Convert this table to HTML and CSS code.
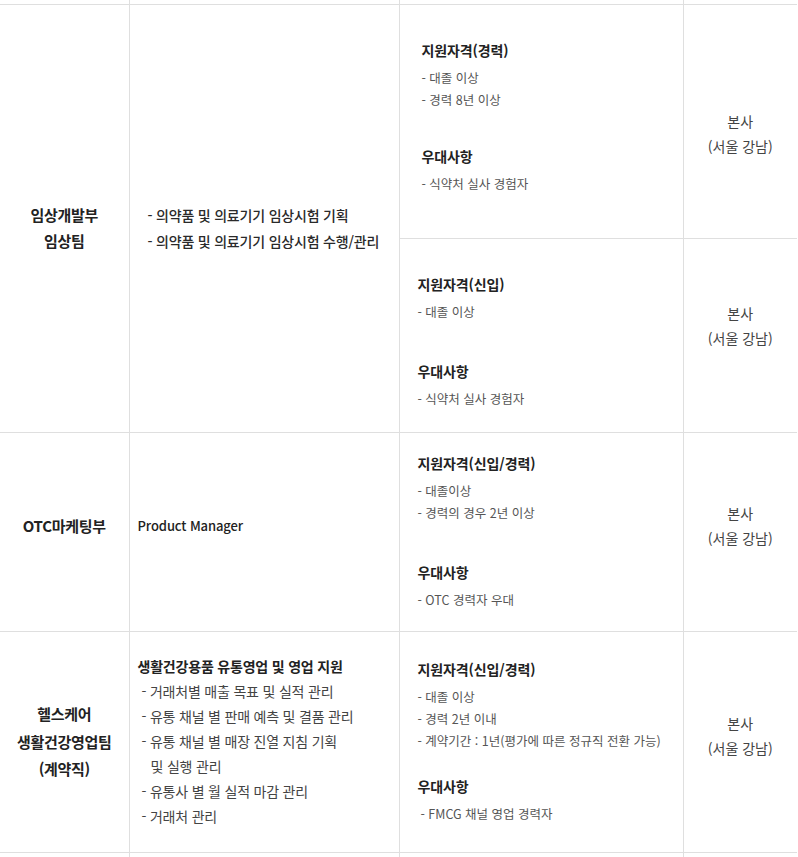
FILE: index.html
```html
<!DOCTYPE html>
<html lang="ko">
<head>
<meta charset="utf-8">
<title>채용 모집 부문</title>
<link rel="stylesheet" href="styles.css">
</head>
<body>
<table class="recruit">
  <colgroup>
    <col class="col-dept">
    <col class="col-duty">
    <col class="col-req">
    <col class="col-loc">
  </colgroup>
  <tr class="stub stub--top"><td></td><td></td><td></td><td></td></tr>

  <tr class="row-1a">
    <td rowspan="2" class="dept push-down">임상개발부<br>임상팀</td>
    <td rowspan="2" class="duty duty--wide push-down">
      <p class="duty-line">- 의약품 및 의료기기 임상시험 기획</p>
      <p class="duty-line">- 의약품 및 의료기기 임상시험 수행/관리</p>
    </td>
    <td class="req req--inset lift-s">
      <div class="req-sec">
        <p class="req-title">지원자격(경력)</p>
        <ul class="req-list">
          <li>- 대졸 이상</li>
          <li>- 경력 8년 이상</li>
        </ul>
      </div>
      <div class="req-sec">
        <p class="req-title">우대사항</p>
        <ul class="req-list">
          <li>- 식약처 실사 경험자</li>
        </ul>
      </div>
    </td>
    <td class="loc push-down-l">본사<br>(서울 강남)</td>
  </tr>

  <tr class="row-1b">
    <td class="req push-down-s">
      <div class="req-sec">
        <p class="req-title">지원자격(신입)</p>
        <ul class="req-list">
          <li>- 대졸 이상</li>
        </ul>
      </div>
      <div class="req-sec req-sec--wide">
        <p class="req-title">우대사항</p>
        <ul class="req-list">
          <li>- 식약처 실사 경험자</li>
        </ul>
      </div>
    </td>
    <td class="loc lift-l">본사<br>(서울 강남)</td>
  </tr>

  <tr class="row-2">
    <td class="dept lift-m">OTC마케팅부</td>
    <td class="duty lift-m"><p class="duty-plain">Product Manager</p></td>
    <td class="req">
      <div class="req-sec">
        <p class="req-title">지원자격(신입/경력)</p>
        <ul class="req-list">
          <li>- 대졸이상</li>
          <li>- 경력의 경우 2년 이상</li>
        </ul>
      </div>
      <div class="req-sec req-sec--wide">
        <p class="req-title">우대사항</p>
        <ul class="req-list">
          <li>- OTC 경력자 우대</li>
        </ul>
      </div>
    </td>
    <td class="loc lift-m">본사<br>(서울 강남)</td>
  </tr>

  <tr class="row-3">
    <td class="dept dept--tall">헬스케어<br>생활건강영업팀<br>(계약직)</td>
    <td class="duty">
      <p class="duty-title">생활건강용품 유통영업 및 영업 지원</p>
      <ul class="duty-list">
        <li>- 거래처별 매출 목표 및 실적 관리</li>
        <li>- 유통 채널 별 판매 예측 및 결품 관리</li>
        <li>- 유통 채널 별 매장 진열 지침 기획<br>및 실행 관리</li>
        <li>- 유통사 별 월 실적 마감 관리</li>
        <li>- 거래처 관리</li>
      </ul>
    </td>
    <td class="req">
      <div class="req-sec">
        <p class="req-title">지원자격(신입/경력)</p>
        <ul class="req-list">
          <li>- 대졸 이상</li>
          <li>- 경력 2년 이내</li>
          <li>- 계약기간 : 1년(평가에 따른 정규직 전환 가능)</li>
        </ul>
      </div>
      <div class="req-sec req-sec--tight">
        <p class="req-title">우대사항</p>
        <ul class="req-list req-list--inset">
          <li>- FMCG 채널 영업 경력자</li>
        </ul>
      </div>
    </td>
    <td class="loc lift-m">본사<br>(서울 강남)</td>
  </tr>

  <tr class="stub stub--bottom"><td></td><td></td><td></td><td></td></tr>
</table>
</body>
</html>
```

FILE: styles.css
```css
* {
  box-sizing: border-box;
}

body {
  margin: 0;
  background: #ffffff;
  color: #222222;
  font-family: "Noto Sans CJK KR", "Noto Sans", sans-serif;
}

p,
ul {
  margin: 0;
  padding: 0;
}

ul {
  list-style: none;
}

td {
  padding: 0;
  vertical-align: middle;
}

.recruit {
  width: 797px;
  border-collapse: collapse;
  table-layout: fixed;
}

.col-dept { width: 129px; }
.col-duty { width: 270px; }
.col-req  { width: 284px; }
.col-loc  { width: 114px; }

.recruit td {
  border: 1px solid #dfdfdf;
}

.recruit td:first-child {
  border-left: none;
}

.recruit td:last-child {
  border-right: none;
}

/* partial rows that continue beyond the visible area */
.stub--top td {
  height: 4px;
  border-top: none;
}

.stub--bottom td {
  height: 5px;
  border-bottom: none;
}

.row-1a { height: 234px; }
.row-1b { height: 194px; }
.row-2  { height: 199px; }
.row-3  { height: 221px; }

/* department column */
.dept {
  text-align: center;
  font-size: 15px;
  font-weight: 700;
  letter-spacing: -0.3px;
  line-height: 26px;
  color: #222222;
}

.dept--tall {
  line-height: 27.5px;
}

/* duty column */
.duty {
  padding-left: 8px;
  font-size: 14px;
  letter-spacing: -0.2px;
  color: #333333;
}

.duty--wide {
  padding-left: 18px;
}

.duty-line {
  line-height: 26px;
  font-weight: 500;
  color: #2a2a2a;
}

.duty-plain {
  font-size: 13px;
  font-weight: 500;
  letter-spacing: -0.1px;
  color: #222222;
  line-height: 26px;
}

.duty-title {
  font-weight: 700;
  color: #222222;
  line-height: 25px;
}

.duty-list li {
  line-height: 25px;
  padding-left: 13px;
  text-indent: -9px;
  color: #444444;
}

/* requirement column */
.req {
  padding-left: 18px;
}

.req--inset {
  padding-left: 22px;
}

.req-sec + .req-sec {
  margin-top: 34px;
}

.req-sec.req-sec--wide {
  margin-top: 37px;
}

.req-sec.req-sec--tight {
  margin-top: 23px;
}

.req-title {
  font-size: 14px;
  font-weight: 700;
  letter-spacing: -0.1px;
  line-height: 22px;
  margin-bottom: 6px;
  color: #222222;
}

.req-list li {
  font-size: 12.5px;
  line-height: 22px;
  color: #555555;
}

.req-list--inset li {
  padding-left: 3px;
}

/* location column */
.loc {
  text-align: center;
  font-size: 14px;
  line-height: 25px;
  color: #444444;
}

/* vertical nudges of cell content */
.push-down   { padding-top: 20px; }
.push-down-s { padding-top: 12px; }
.push-down-l { padding-top: 26px; }
.lift-s      { padding-bottom: 8px; }
.lift-m      { padding-bottom: 12px; }
.lift-l      { padding-bottom: 18px; }
```
